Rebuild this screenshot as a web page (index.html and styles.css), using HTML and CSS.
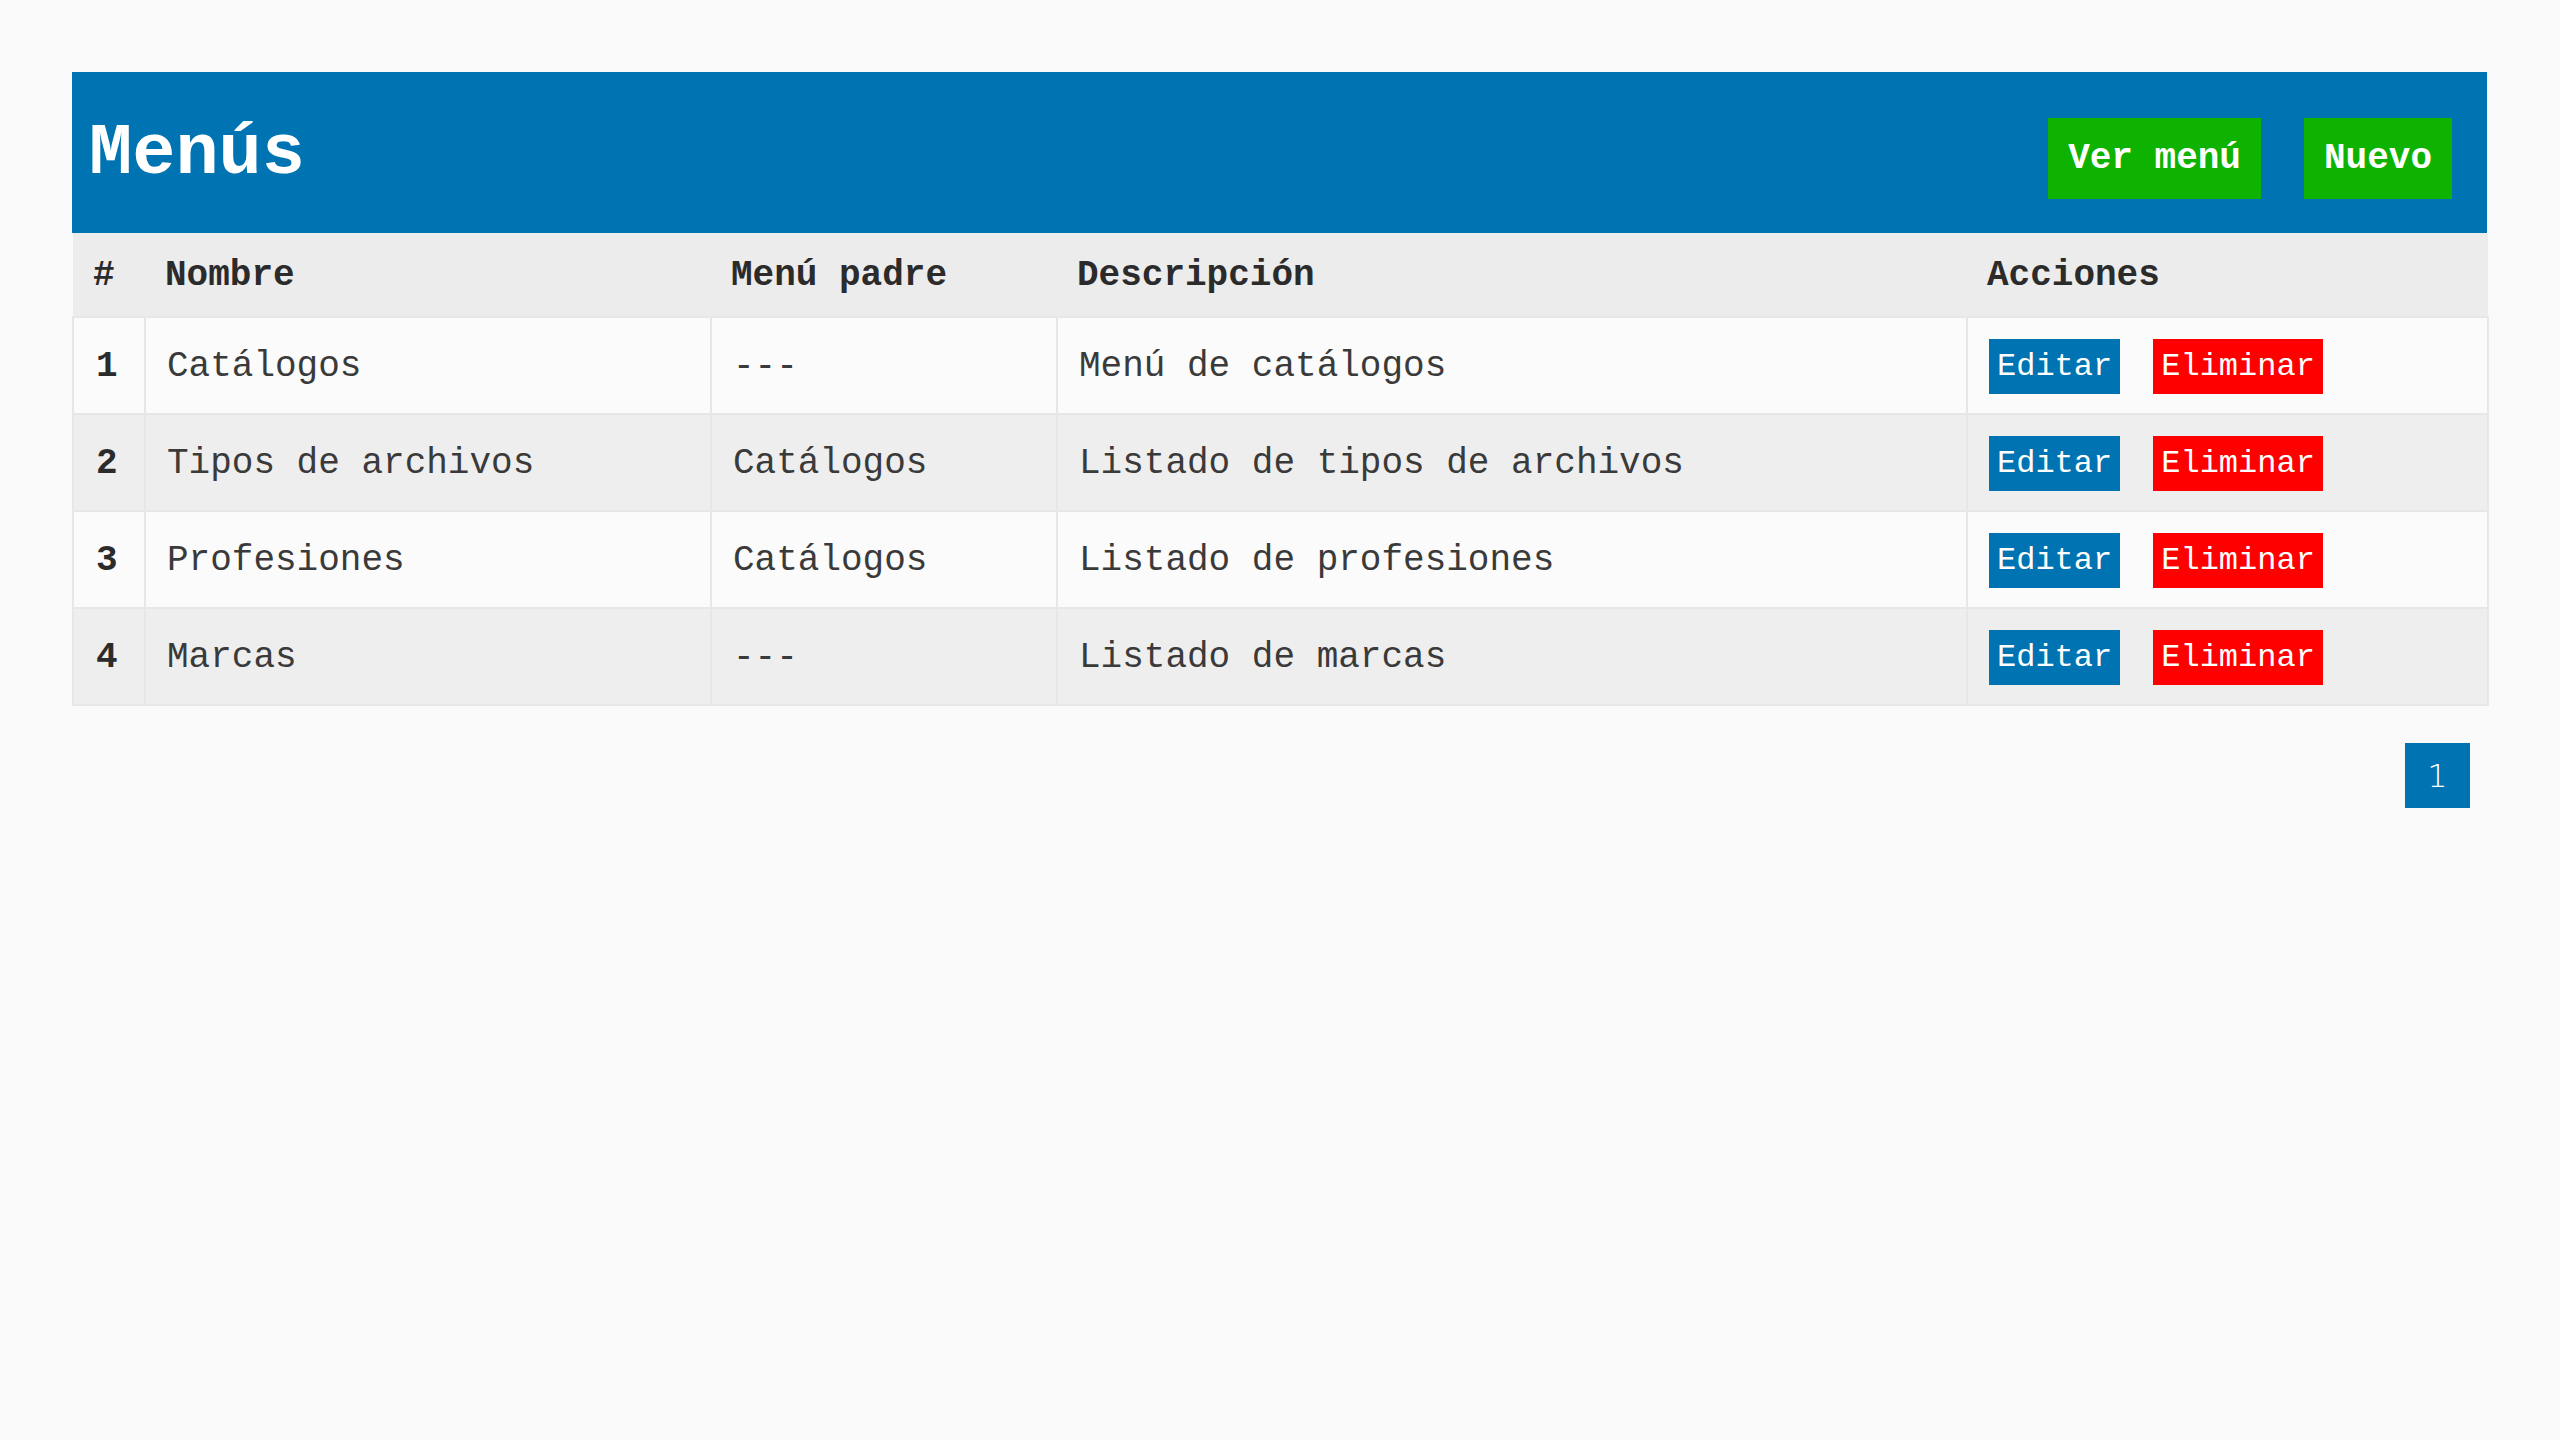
FILE: index.html
```html
<!DOCTYPE html>
<html lang="es">
<head>
<meta charset="utf-8">
<title>Menús</title>
<link rel="stylesheet" href="styles.css">
</head>
<body>
<div class="page">
  <header class="bar">
    <h1 class="title">Menús</h1>
    <div class="bar-actions">
      <a class="btn btn-green">Ver menú</a>
      <a class="btn btn-green">Nuevo</a>
    </div>
  </header>
  <table class="grid">
    <colgroup>
      <col class="c-num"><col class="c-name"><col class="c-parent"><col class="c-desc"><col class="c-act">
    </colgroup>
    <thead>
      <tr><th>#</th><th>Nombre</th><th>Menú padre</th><th>Descripción</th><th>Acciones</th></tr>
    </thead>
    <tbody>
      <tr><th>1</th><td>Catálogos</td><td>---</td><td>Menú de catálogos</td><td><span class="act"><a class="sbtn sbtn-blue">Editar</a><a class="sbtn sbtn-red">Eliminar</a></span></td></tr>
      <tr><th>2</th><td>Tipos de archivos</td><td>Catálogos</td><td>Listado de tipos de archivos</td><td><span class="act"><a class="sbtn sbtn-blue">Editar</a><a class="sbtn sbtn-red">Eliminar</a></span></td></tr>
      <tr><th>3</th><td>Profesiones</td><td>Catálogos</td><td>Listado de profesiones</td><td><span class="act"><a class="sbtn sbtn-blue">Editar</a><a class="sbtn sbtn-red">Eliminar</a></span></td></tr>
      <tr><th>4</th><td>Marcas</td><td>---</td><td>Listado de marcas</td><td><span class="act"><a class="sbtn sbtn-blue">Editar</a><a class="sbtn sbtn-red">Eliminar</a></span></td></tr>
    </tbody>
  </table>
  <nav class="pager"><span class="page-num">1</span></nav>
</div>
</body>
</html>
```
FILE: styles.css
```css
html, body {
  margin: 0;
  padding: 0;
  background: #fafafa;
}
body {
  font-family: "Liberation Mono", "Courier New", monospace;
  font-size: 36px;
  color: #333333;
}
.page {
  padding: 72px 73px 72px 72px;
}
.bar {
  background: #0073b2;
  height: 161px;
  display: flex;
  align-items: center;
  justify-content: space-between;
  padding: 0 35px 0 17px;
  box-sizing: border-box;
}
.title {
  margin: 0;
  color: #ffffff;
  font-size: 72px;
  font-weight: bold;
  line-height: 1;
  margin-top: 2px;
}
.bar-actions {
  display: flex;
  gap: 43px;
  margin-top: 12px;
}
.btn {
  display: block;
  color: #ffffff;
  font-weight: bold;
  font-size: 36px;
  line-height: 41px;
  padding: 20px 20px;
}
.btn-green {
  background: #0db300;
}
.grid {
  width: 100%;
  border-collapse: collapse;
  table-layout: fixed;
}
.c-num { width: 72px; }
.c-name { width: 566px; }
.c-parent { width: 346px; }
.c-desc { width: 910px; }
.c-act { width: 521px; }
.grid thead th {
  background: #ececec;
  height: 84px;
  padding: 2px 20px 0 20px;
  text-align: left;
  font-weight: bold;
  color: #2b2b2b;
  border-bottom: 1px solid #e4e4e4;
  box-sizing: border-box;
}
.grid tbody th,
.grid tbody td {
  border: 2px solid #e7e7e7;
  height: 97px;
  padding: 2px 12px 0 12px;
  text-align: left;
  vertical-align: middle;
  box-sizing: border-box;
}
.grid tbody th {
  font-weight: bold;
  color: #2b2b2b;
  padding-left: 22px;
}
.grid tbody td {
  font-weight: normal;
  color: #3a3a3a;
  padding-left: 21px;
}
.grid tbody tr:nth-child(odd) {
  background: #fbfbfb;
}
.grid tbody tr:nth-child(even) {
  background: #eeeeee;
}
.act {
  display: flex;
  gap: 33px;
}
.sbtn {
  display: block;
  color: #ffffff;
  font-size: 32px;
  line-height: 37px;
  padding: 9px 8px;
}
.sbtn-blue { background: #0073b2; }
.sbtn-red { background: #ff0000; }
.pager {
  display: flex;
  justify-content: flex-end;
  margin-top: 37px;
  padding-right: 17px;
}
.page-num {
  display: flex;
  align-items: center;
  justify-content: center;
  width: 65px;
  height: 65px;
  background: #0073b2;
  color: #ffffff;
  font-family: "DejaVu Sans", "Liberation Sans", sans-serif;
  font-size: 32px;
  font-weight: 300;
}
```
